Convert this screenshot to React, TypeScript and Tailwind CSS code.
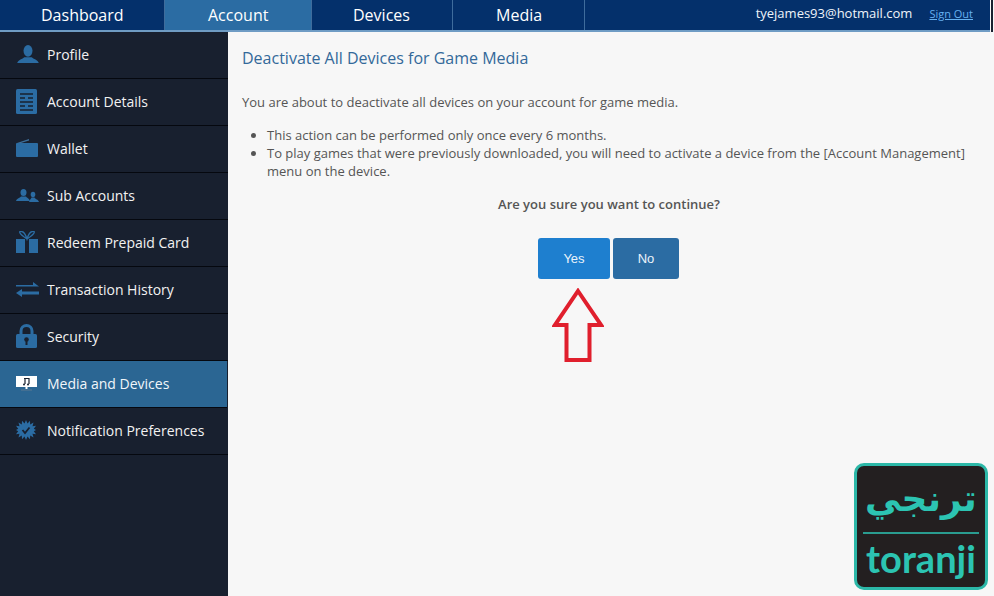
const navItems = [
  { label: 'Dashboard', width: 'w-[165px]', pl: 'pl-[41px]', active: false },
  { label: 'Account', width: 'w-[147px]', pl: 'pl-[43px]', active: true },
  { label: 'Devices', width: 'w-[141px]', pl: 'pl-[41px]', active: false },
  { label: 'Media', width: 'w-[132px]', pl: 'pl-[43px]', active: false },
]

const blue = '#2b6ca3'

function ProfileIcon() {
  return (
    <svg width="24" height="18" viewBox="0 0 24 20" fill={blue}>
      <ellipse cx="12" cy="6.500" rx="5" ry="6.500" />
      <path d="M0 20c1-4 6-4.500 8-6.500h8c2 2 7 2.500 8 6.500z" />
    </svg>
  )
}

function DetailsIcon() {
  return (
    <svg width="21" height="25" viewBox="0 0 21 25">
      <rect width="21" height="25" rx="1.500" fill={blue} />
      <path d="M4 5h13M4 9h5M12 9h5M4 13h13M4 17h5M12 17h5M4 21h13" stroke="#18202f" strokeWidth="1.500" />
    </svg>
  )
}

function WalletIcon() {
  return (
    <svg width="22" height="18" viewBox="0 0 22 18" fill={blue}>
      <path d="M1 4 13 0v1.500L5 4z" fill="#3d6f9b" />
      <rect y="4" width="22" height="14" rx="1" />
    </svg>
  )
}

function SubAccountsIcon() {
  return (
    <svg width="23" height="13" viewBox="0 0 23 13" fill={blue}>
      <ellipse cx="7.500" cy="3.500" rx="3" ry="3.500" />
      <path d="M0 12c1-3 4-3 5-4.500h5c1 1.500 3 1.500 4 4.500z" />
      <ellipse cx="17" cy="5.500" rx="2.300" ry="2.800" />
      <path d="M13 13c.5-2 2-3 2.500-4.500h3C19 10 22.500 10.500 23 13z" />
    </svg>
  )
}

function GiftIcon() {
  return (
    <svg width="22" height="22" viewBox="0 0 22 22" fill={blue}>
      <path d="M11 8C8 6 5 4 4 2c-1-2 1-2 3-1s3 4 4 7c1-3 2-6 4-7s4-1 3 1c-1 2-4 4-7 6z" fill="none" stroke={blue} strokeWidth="1.400" />
      <rect y="8" width="9" height="14" />
      <rect x="13" y="8" width="9" height="14" />
    </svg>
  )
}

function TransferIcon() {
  return (
    <svg width="23" height="15" viewBox="0 0 23 15" fill={blue}>
      <path d="M0 3h17V0l6 4.500H0zM23 9.500H6V7L0 11l6 4v-2.500h17z" />
    </svg>
  )
}

function LockIcon() {
  return (
    <svg width="21" height="24" viewBox="0 0 21 24">
      <path d="M5 11V7a5.500 5.500 0 0 1 11 0v4" fill="none" stroke={blue} strokeWidth="3" />
      <rect y="10" width="21" height="14" rx="1.500" fill={blue} />
      <circle cx="10.500" cy="15.500" r="2.300" fill="#18202f" />
      <rect x="9.500" y="16" width="2" height="5" fill="#18202f" />
    </svg>
  )
}

function MediaIcon() {
  return (
    <svg width="21" height="16" viewBox="0 0 21 16">
      <rect y="1" width="21" height="11" fill="#ffffff" />
      <path d="M8 3.500h5V9M9 3.500V9" stroke="#18202f" strokeWidth="1.200" fill="none" />
      <circle cx="8" cy="9.500" r="1" fill="#18202f" />
      <circle cx="12" cy="9.500" r="1" fill="#18202f" />
      <rect x="9.500" y="12" width="2" height="2" fill="#ffffff" />
      <rect x="5" y="14.500" width="11" height="1" fill="#5d7891" />
    </svg>
  )
}

function BadgeIcon() {
  return (
    <svg width="20" height="20" viewBox="0 0 20 20">
      <path
        d="M10 0l1.500 3.500L14 .8l.2 3.800L17.500 2.500l-1 3.700 3.500-.5-2.200 3 2.200 1.300-2.200 1.300 2.200 3-3.500-.5 1 3.700-3.300-2.100L14 19.200l-2.500-2.700L10 20l-1.500-3.500L6 19.200l-.2-3.800-3.300 2.100 1-3.700L0 14.300l2.200-3L0 10l2.200-1.300-2.200-3 3.500.5-1-3.700 3.300 2.100L6 .8l2.500 2.700z"
        fill={blue}
      />
      <path d="M6.500 10l2.500 3 4.500-5.500" stroke="#18202f" strokeWidth="1.800" fill="none" />
    </svg>
  )
}

const sideItems = [
  { label: 'Profile', icon: <ProfileIcon /> },
  { label: 'Account Details', icon: <DetailsIcon /> },
  { label: 'Wallet', icon: <WalletIcon /> },
  { label: 'Sub Accounts', icon: <SubAccountsIcon /> },
  { label: 'Redeem Prepaid Card', icon: <GiftIcon /> },
  { label: 'Transaction History', icon: <TransferIcon /> },
  { label: 'Security', icon: <LockIcon /> },
  { label: 'Media and Devices', icon: <MediaIcon />, active: true },
  { label: 'Notification Preferences', icon: <BadgeIcon /> },
]

function ToranjiLogo() {
  return (
    <div className="absolute left-[854px] top-[463px] flex h-[127px] w-[134px] flex-col items-center rounded-[10px] border-[3px] border-[#2cb8a8] bg-[#231f20]">
      <div className="flex h-[66px] items-center font-['DejaVu_Sans',sans-serif] text-[36px] font-bold leading-none text-[#2cc4b2]" dir="rtl">
        ترنجي
      </div>
      <div className="h-[2px] w-[116px] bg-[#2a9c90]" />
      <div className="mt-[2px] font-['Lato',sans-serif] text-[38px] font-bold leading-[44px] text-[#2cc4b2]">toranji</div>
    </div>
  )
}

export default function App() {
  return (
    <div className="relative flex h-[596px] w-[994px] flex-col overflow-hidden bg-[#f7f7f7] font-['Open_Sans',sans-serif]">
      <div className="flex h-[32px] shrink-0">
        <header className="flex h-full w-[990px] shrink-0 border-b-2 border-[#6f9cc4] bg-[#04306b] text-white">
          {navItems.map((item) => (
            <div
              key={item.label}
              className={`flex h-full items-center border-r border-[#3f6c9c] text-[16px] ${item.width} ${item.pl} ${
                item.active ? 'bg-[#2b6ca3]' : ''
              }`}
            >
              {item.label}
            </div>
          ))}
          <div className="ml-auto flex items-center pb-[2px] text-[13px]">
            <span className="text-[#eef4fa]">tyejames93@hotmail.com</span>
            <a className="ml-[17px] mr-[17px] text-[11px] text-[#66b0f0] underline">Sign Out</a>
          </div>
        </header>
        <div className="ml-[1px] h-full w-[2px] bg-[#18202f]" />
      </div>

      <div className="flex min-h-0 flex-1">
        <aside className="h-full w-[228px] shrink-0 bg-[#18202f]">
          {sideItems.map((item) => (
            <div
              key={item.label}
              className={`flex h-[47px] items-center border-b border-[#05080f] pb-[2px] text-[14px] ${
                item.active ? 'mr-[1px] bg-[#2b6693] text-[#f2f6fa]' : 'text-[#f2f2f2]'
              }`}
            >
              <span className="flex w-[47px] shrink-0 items-center pl-[16px]">{item.icon}</span>
              {item.label}
            </div>
          ))}
        </aside>

        <main className="min-w-0 flex-1 pl-[14px] pr-[26px] pt-[15px] text-[13px] text-[#555555]">
          <h1 className="text-[16px] leading-[22px] text-[#33699a]">Deactivate All Devices for Game Media</h1>
          <p className="mt-[24px] leading-[18px]">You are about to deactivate all devices on your account for game media.</p>
          <ul className="mt-[15px] list-disc pl-[25px] leading-[18px]">
            <li>This action can be performed only once every 6 months.</li>
            <li>
              To play games that were previously downloaded, you will need to activate a device from the [Account Management]
              menu on the device.
            </li>
          </ul>
          <p className="ml-[8px] mt-[15px] text-center font-semibold leading-[18px]">Are you sure you want to continue?</p>
          <div className="ml-[296px] mt-[25px] flex gap-[3px] font-['Liberation_Sans',sans-serif] text-[13px] text-[#eaf3fb]">
            <button className="h-[41px] w-[72px] rounded-[3px] bg-[#1e7fcf]">Yes</button>
            <button className="h-[41px] w-[66px] rounded-[3px] bg-[#2b6ca3]">No</button>
          </div>
          <svg width="52" height="76" viewBox="0 0 52 76" className="ml-[310px] mt-[9px]" fill="none">
            <path d="M26 3 49 37H37.500V72H14.500V37H3Z" stroke="#e01f2d" strokeWidth="4" strokeLinejoin="miter" />
          </svg>
        </main>
      </div>

      <ToranjiLogo />
    </div>
  )
}
